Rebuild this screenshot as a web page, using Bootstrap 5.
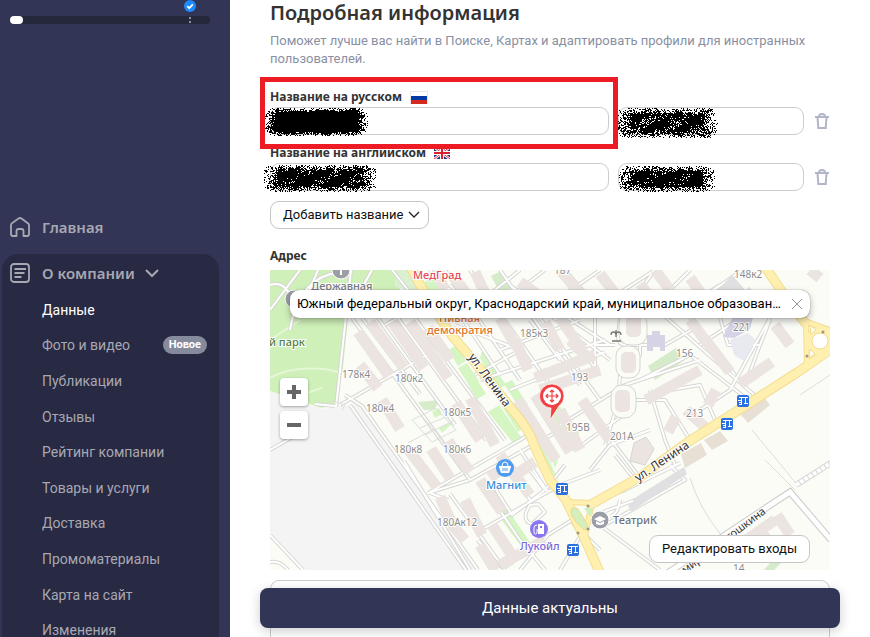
<!DOCTYPE html>
<html lang="ru">
<head>
<meta charset="utf-8">
<meta name="viewport" content="width=device-width, initial-scale=1">
<title>Подробная информация</title>
<link href="https://cdn.jsdelivr.net/npm/bootstrap@5.3.0/dist/css/bootstrap.min.css" rel="stylesheet">
<style>
  body { font-family: Roboto, "Noto Sans", sans-serif; font-size: 13px; line-height: 18px; color: #222; background: #fff; }
  .side-panel { width: 230px; background: #323555; color: #a7a8b2; }
  .side-panel a { color: inherit; text-decoration: none; }
  .level-area { height: 216px; padding: 16px 20px 0 10px; }
  .level-track { height: 8px; border-radius: 4px; background: #25273b; }
  .level-done { width: 13px; height: 8px; border-radius: 4px; background: #fff; }
  .level-mark { right: 14px; top: -16px; }
  .side-head { font-family: "Noto Sans", sans-serif; font-size: 15px; line-height: 22px; font-weight: 600; gap: 12px; padding-left: 10px; }
  .side-group { margin: 16px 11px 0 2px; padding-top: 8px; border-radius: 16px 16px 0 0; background: #282943; }
  .side-group .side-head { padding-left: 8px; gap: 10px; }
  .side-group .side-head span { margin-left: 2px; }
  .side-items { height: 356px; margin-top: 8px; padding: 0 12px 0 40px; font-size: 14px; }
  .side-items a.active { color: #fff; }
  .new-tag { font-size: 11px; line-height: 18px; padding: 0 6px; border-radius: 9px; background: #858a9c; color: #fff; font-weight: 700; }
  .page-body { padding: 1px 40px 0; }
  .page-title { font-family: "Noto Sans", sans-serif; font-size: 20px; line-height: 24px; font-weight: 600; color: #333; margin-bottom: 7px; }
  .page-note { color: #8a90a4; margin-bottom: 20px; }
  .field-label { font-family: "Noto Sans", sans-serif; font-weight: 700; font-size: 12px; line-height: 18px; color: #333; }
  .name-row { gap: 9px; margin-top: 1px; }
  .name-group { margin-bottom: 9px; }
  .name-row .long-box { flex: 339 1 0; }
  .name-row .short-box { flex: 186 1 0; }
  .plain-box { height: 28px; border: 1px solid #ccc; border-radius: 9px; padding: 0 12px; font-size: 13px; }
  .bin-btn { width: 16px; height: 28px; margin-left: 1px; }
  .line-btn { height: 28px; border: 1px solid #c6c6c6; border-radius: 9px; background: #fff; color: #111; padding: 0 8px 0 12px; font-size: 13px; line-height: 18px; }
  .add-btn { margin: 10px 0 18px; }
  .focus-frame { left: -10px; right: 212px; top: -11px; height: 72px; border: 5px solid #ed1c24; z-index: 3; pointer-events: none; }
  .scribble { left: -10px; top: -5px; width: 130px; height: 38px; z-index: 2; pointer-events: none; }
  .map-box { background: #fbfcf6; margin-top: 5px; }
  .map-box > svg { width: 100%; height: 300px; }
  .address-box { left: 20px; right: 20px; top: 20px; height: 28px; padding: 0 7px; border-radius: 9px; background: #fff; box-shadow: 0 0 1px #555, 0 3px 7px rgba(0,0,0,.3); }
  .address-box input { font-size: 13px; color: #000; text-overflow: ellipsis; }
  .zoom-set { left: 10px; top: 108px; gap: 5px; }
  .zoom-set button { width: 28px; height: 28px; border-radius: 4px; background: #fff; box-shadow: 0 1px 3px rgba(0,0,0,.35); }
  .entry-btn { right: 20px; bottom: 7px; padding: 0 12px; }
  .next-box { height: 80px; margin-top: 10px; border: 1px solid #ccc; border-radius: 9px; }
  .save-btn { left: 30px; right: 30px; bottom: 9px; height: 40px; border-radius: 8px; background: #323555; color: #fff; font-size: 15px; box-shadow: 0 3px 12px rgba(0,0,0,.2); z-index: 4; }
</style>
</head>
<body>
<div class="d-flex vh-100 overflow-hidden">
  <nav class="side-panel flex-shrink-0" aria-label="Разделы">
    <div class="level-area">
      <div class="level-track position-relative">
        <div class="level-done"></div>
        <svg class="level-mark position-absolute" width="12" height="24" viewBox="0 0 12 24" aria-hidden="true">
          <circle cx="6" cy="6" r="6" fill="#1e88ff"/><path d="M3.2 6.2l2 2 3.6-3.9" fill="none" stroke="#fff" stroke-width="1.7"/>
          <path d="M5 17h2v2H5zM5 21h2v2H5z" fill="#8d8f9f"/>
        </svg>
      </div>
    </div>
    <a href="#" class="side-head d-flex align-items-center">
      <svg width="20" height="20" viewBox="0 0 20 20" fill="none" stroke="currentColor" stroke-width="1.8" stroke-linejoin="round" aria-hidden="true"><path d="M3 19q-2 0-2-2V8q0-1 .8-1.600L8.500 1.500q1.500-1 3 0l6.700 4.900Q19 7 19 8v9q0 2-2 2h-3.500v-5q0-2-2-2h-3q-2 0-2 2v5z"/></svg>
      Главная
    </a>
    <div class="side-group">
      <a href="#" class="side-head d-flex align-items-center">
        <svg width="20" height="20" viewBox="0 0 20 20" fill="none" stroke="currentColor" stroke-width="1.800" aria-hidden="true"><rect x="1" y="1" width="18" height="18" rx="3"/><path d="M6 6h10M4.500 10h10M6 10h8M4.500 14h7M4.500 6h2"/></svg>
        <span>О компании</span>
        <svg width="14" height="9" viewBox="0 0 14 9" fill="none" stroke="currentColor" stroke-width="2" aria-hidden="true"><path d="M1 1l6 6 6-6"/></svg>
      </a>
      <div class="side-items d-flex flex-column">
        <a href="#" class="active d-flex align-items-center flex-fill" aria-current="page">Данные</a>
        <a href="#" class="d-flex align-items-center justify-content-between flex-fill">Фото и видео <span class="new-tag">Новое</span></a>
        <a href="#" class="d-flex align-items-center flex-fill">Публикации</a>
        <a href="#" class="d-flex align-items-center flex-fill">Отзывы</a>
        <a href="#" class="d-flex align-items-center flex-fill">Рейтинг компании</a>
        <a href="#" class="d-flex align-items-center flex-fill">Товары и услуги</a>
        <a href="#" class="d-flex align-items-center flex-fill">Доставка</a>
        <a href="#" class="d-flex align-items-center flex-fill">Промоматериалы</a>
        <a href="#" class="d-flex align-items-center flex-fill">Карта на сайт</a>
        <a href="#" class="d-flex align-items-center flex-fill">Изменения</a>
      </div>
    </div>
  </nav>

  <main class="flex-grow-1 position-relative overflow-hidden">
    <div class="page-body">
      <h1 class="page-title">Подробная информация</h1>
      <p class="page-note">Поможет лучше вас найти в Поиске, Картах и адаптировать профили для иностранных пользователей.</p>

      <div class="name-group position-relative">
        <label class="field-label d-flex align-items-center" for="ru-name">Название на русском
          <svg class="ms-2" width="18" height="13" viewBox="0 0 18 13" aria-hidden="true"><path fill="#e8e8e8" d="M0 0h18v13H0z"/><path fill="#fff" d="M1 1h16v4H1z"/><path fill="#0039a6" d="M1 5h16v4H1z"/><path fill="#d52b1e" d="M1 9h16v4H1z"/></svg>
        </label>
        <div class="name-row d-flex">
          <div class="long-box position-relative"><input id="ru-name" type="text" class="plain-box w-100 d-block"><svg class="scribble position-absolute" data-x="4" data-y="5" data-w="104" data-h="29" data-fill="1.6" data-seed="7" aria-hidden="true"></svg></div>
          <div class="short-box position-relative"><input type="text" class="plain-box w-100 d-block" aria-label="Сокращение на русском"><svg class="scribble position-absolute" data-x="8" data-y="5" data-w="102" data-h="31" data-fill="0.9" data-seed="21" aria-hidden="true"></svg></div>
          <button type="button" class="bin-btn btn p-0 border-0 d-flex align-items-center" aria-label="Удалить"><svg width="16" height="18" viewBox="0 0 16 18" fill="none" stroke="#b0b5c7" stroke-width="2" aria-hidden="true"><path d="M1 5h14M3.500 5l.8 11h7.400l.8-11M5 4.500q0-2.500 3-2.500t3 2.500"/></svg></button>
        </div>
        <div class="focus-frame position-absolute"></div>
      </div>

      <div>
        <label class="field-label d-flex align-items-center" for="en-name">Название на английском
          <svg class="ms-2" width="16" height="12" viewBox="0 0 16 12" aria-hidden="true"><path fill="#26337a" d="M0 0h16v12H0z"/><path d="M0 0l16 12M16 0L0 12" stroke="#fff" stroke-width="2.600"/><path d="M0 0l16 12M16 0L0 12" stroke="#e0303f" stroke-width="1"/><path d="M8 0v12M0 6h16" stroke="#fff" stroke-width="4"/><path d="M8 0v12M0 6h16" stroke="#d8202f" stroke-width="2"/></svg>
        </label>
        <div class="name-row d-flex">
          <div class="long-box position-relative"><input id="en-name" type="text" class="plain-box w-100 d-block"><svg class="scribble position-absolute" data-x="3" data-y="6" data-w="113" data-h="28" data-fill="1" data-seed="33" aria-hidden="true"></svg></div>
          <div class="short-box position-relative"><input type="text" class="plain-box w-100 d-block" aria-label="Сокращение на английском"><svg class="scribble position-absolute" data-x="10" data-y="7" data-w="97" data-h="27" data-fill="1" data-seed="48" aria-hidden="true"></svg></div>
          <button type="button" class="bin-btn btn p-0 border-0 d-flex align-items-center" aria-label="Удалить"><svg width="16" height="18" viewBox="0 0 16 18" fill="none" stroke="#b0b5c7" stroke-width="2" aria-hidden="true"><path d="M1 5h14M3.500 5l.8 11h7.400l.8-11M5 4.500q0-2.500 3-2.500t3 2.500"/></svg></button>
        </div>
      </div>
      <button type="button" class="line-btn add-btn d-flex align-items-center gap-1">Добавить название
        <svg width="12" height="8" viewBox="0 0 12 8" fill="none" stroke="#222" stroke-width="1.300" aria-hidden="true"><path d="M1 1l5 5 5-5"/></svg></button>

      <label class="field-label d-block" for="address">Адрес</label>
      <div class="map-box position-relative">
        <svg class="d-block" viewBox="270 270 560 300" preserveAspectRatio="xMidYMid slice" role="img" aria-label="Карта">
          <defs>
            <g id="lanes" fill="none" stroke-linejoin="round">
              <path d="M351 270L336 407M372 270L345 318M392 270L420 305L385 325M345 395L362 406L478 570M350 405L466 570M404 461L470 570M352 318L470 480L560 430M362 318L420 394M378 318L455 425M398 318L486 440M415 318L505 440M432 352L340 405M428 493L520 440L536 430M470 480L428 493M450 494L505 570M482 484L520 540L545 570M430 493L448 500"/>
              <path d="M476 533L560 485L600 470M478 540L500 570M490 480L512 515L545 490L530 470M520 450L548 492M505 460L530 500M530 505Q520 520 532 524L545 512L538 504ZM520 570L548 535L572 520"/>
              <path d="M430 270L500 375M445 270L520 380M470 270L550 385M500 270L580 385M520 270L470 310M545 270L490 312M600 270L540 312M655 270L590 312M690 270L650 310M720 285L680 312M510 285L610 360M540 300L610 345M455 325L520 350L475 375M500 350L580 320M480 380L605 340M510 390L605 352M530 320L560 360"/>
              <path d="M540 318L600 400M560 320L595 368L595 318M640 318V355L620 375L618 402L605 445M620 318L618 335Q618 345 625 345H665L700 325M595 345H615M660 312L760 400M690 318L735 375M740 318L700 345M770 318L730 390L700 410M760 345L745 385M720 318L728 345H760L770 320"/>
              <path d="M560 425L625 385L700 360M575 450L630 410M590 470L610 445L650 430M615 455L635 480M625 400L665 400L690 440L745 410M650 390L665 440L675 465M640 380L690 355L755 405M600 425L640 478M565 465L545 490M670 390L700 385L715 420"/>
              <path d="M600 525L660 570M595 500L625 490L680 463M603 512L635 500M670 465L685 480L605 525M590 520L560 570M600 550L570 520M620 500Q618 515 610 516"/>
              <path d="M270 450L305 430M270 535L303 570M315 404L335 406M270 562Q280 560 288 570"/>
              <path d="M270 310L300 270M290 330Q300 270 350 272M270 285Q285 280 292 300L350 310M318 270L305 300M565 270L600 310M655 270L640 290L665 312M470 310L450 285M742 270L700 300M765 310L735 290"/>
            </g>
            <g id="stop"><rect x="-6" y="-6" width="12" height="12" rx="2" fill="#2b6fe0"/><path d="M-4-4h9v1h-2v5h2v1h-4v-1h1v-5h-3v2h-1v-2h-2zM-5-1h4v5h-3v-1h2v-1h-2v-1h2v-1h-3z" fill="#fff"/></g>
            <path id="yellow" d="M411 268Q430 305 453 337L473 360L510 407Q530 430 534 445L550 480L566 500L583 535L600 573M590 505L640 477L688 442L745 406L798 372L834 347M766 268L782 292L806 324"/>
          </defs>
          <path fill="#fbfcf6" d="M270 270h560v300H270z"/>
          <path fill="#f4f4f4" d="M270 391L323 409L361 404L478 570H305L270 533Z"/>
          <path fill="#cff0b8" d="M270 270H395L400 290L348 318L343 367L335 403L322 408L270 391Z"/>
          <path fill="#daf0d0" d="M395 270h20l14 25-34-8z"/>
          <path d="M270 378Q290 366 325 369L338 372M270 340L300 320M300 395L322 388" fill="none" stroke="#e6f6d8" stroke-width="2"/>
          <g fill="#d5f5c3">
            <path d="M420 285l12-8 14 22-12 8zM448 350l9-5 10 15-9 6zM458 368l9-5 12 18-9 6zM469 386l9-5 8 13-9 5zM488 412l11-7 24 35-8 5zM501 405l9-5 16 25-8 7zM432 412l7-4 3 6-7 4zM439 428l17-8-14 13z"/>
            <path d="M500 518l10-5 24 35-8 5zM535 435l14 25 10 22-16-22zM512 380l16 25-8 4-16-25zM482 350l24 35-8 4-18-31zM460 300l20 18-10 6zM545 415l14-10 20 28-4 20zM548 448l10 12-3 8z"/>
          </g>
          <g fill="#d5ebca"><path d="M491 276l10-5 11 17-11 7zM648 366l28-18 9 12-30 20zM484 492l9-7 20 27-9 6zM497 566l12-8 5 6-10 6zM418 402l22-2-6 10h-10zM764 570l12-14 7 5-9 9zM779 556l9-5 5 6-10 5z"/></g>
          <use href="#lanes" stroke="#d6d7d3" stroke-width="4"/>
          <use href="#lanes" stroke="#fff" stroke-width="2"/>
          <g fill="none" stroke="#dcdedb" stroke-width="1"><path d="M412 420l20 22 24-12-20-22zM420 428l28-12M425 435l28-14M420 414l22 25M408 443l26-14 35 52M690 478Q700 510 722 536M752 430L795 482M800 395l30-20M765 460l30 30M330 400l15 5-3 5"/></g>
          <g fill="none" stroke="#ebe4e1" stroke-width="11">
            <path d="M358 332L389 376M370 322L404 368M392 322L424 368M410 322L448 378M428 328L450 360M360 365L378 388M382 400L400 429M456 403L480 440M470 398L495 445M407 448L437 487M431 449L450 478M448 441L470 472M465 500L482 535M480 480L502 512M490 478L505 466M500 455L530 495M440 497L453 526L465 540M492 525L515 560M480 545L495 570M500 565L545 540M510 478L535 462"/>
            <path d="M455 278L473 303M475 272L488 300M435 270L445 290M520 282L548 302M560 270L590 305M600 274L620 300M690 278L710 306M515 340L528 370M500 318L515 345M545 322L560 350M560 318L582 350M535 378L595 355M540 390L600 370M518 400L556 460M535 395L570 452M560 410L580 450M582 400L610 440M590 360L570 340"/>
            <path d="M704 338L730 372M740 384L772 362M646 400L700 370M708 405L716 390M668 432L676 417M706 428L686 410M775 325L790 345M690 320L705 340M640 284L660 310M655 270L670 290M745 290L760 310M735 548L775 520M760 530L782 560M777 515L790 535M810 270L820 278"/>
          </g>
          <g fill="#fbfcf6" stroke="#d5d6d2"><rect x="619" y="312" width="28" height="33" rx="11"/><rect x="616" y="346" width="24" height="32" rx="10"/><rect x="611" y="385" width="25" height="33" rx="11"/></g>
          <g fill="#ebe4e1"><rect x="626" y="310" width="15" height="27" rx="5"/><rect x="621" y="352" width="15" height="21" rx="5"/><rect x="615" y="390" width="15" height="22" rx="5"/><path stroke="#d5d6d2" d="M634 443l12-6 8 12-9 16-15-4z"/></g>
          <path fill="#e8e0d5" d="M681 454l20-11 6 12-22 13zM704 440l16-9 8 10-16 9zM742 405l22-8 6 8-22 18-7-8z"/>
          <path fill="#e0e0e2" d="M628 505l56-37 3 6-56 38zM633 499l51-32 2 4-53 33zM718 290l14-15 15 17-16 15z"/>
          <g fill="#d5d3e5"><path d="M647 351v-16h5v-4h8v4h5v16h-5v-5h-7v5zM723 337l10-20h20l-3 12-16 9z"/><path fill="#e9e9f2" d="M730 340l18-7 8 7-12 21-10-6z"/></g>
          <g fill="none" stroke-linejoin="round">
            <use href="#yellow" stroke="#f3dc90" stroke-width="10"/>
            <path stroke="#f3dc90" stroke-width="6" d="M566 502L592 503L584 540L566 502M806 322L807 366M802 320L832 331"/><circle cx="820" cy="341" r="11" stroke="#f3dc90" stroke-width="8"/>
            <use href="#yellow" stroke="#fff0b0" stroke-width="8"/>
            <path stroke="#fff0b0" stroke-width="4" d="M566 502L592 503L584 540L566 502M806 322L807 366M802 320L832 331"/><circle cx="820" cy="341" r="11" stroke="#fff0b0" stroke-width="6"/><circle cx="820" cy="341" r="8" fill="#fff" stroke="#f3dc90"/>
            <path fill="#fbfcf6" stroke="#f3dc90" d="M810 325l6 5-5 4zM810 349l5 5-6 4z"/>
          </g>
          <path fill="#d2efbd" stroke="#f1d987" d="M571 509q5-4 9 3l7 12q2 8-4 5l-8-8q-5-7-4-12z"/><path fill="#d2efbd" d="M584 508h9l-3 9z"/>
          <g fill="#9a9a80"><circle cx="588" cy="506" r="1.500"/><circle cx="588" cy="529" r="1.500"/><circle cx="578" cy="533" r="1.500"/><circle cx="823" cy="332" r="1.500"/><circle cx="807" cy="356" r="1.500"/></g>
          <path d="M645 588L790 492L831 540" fill="none" stroke="#c9cbc9" stroke-width="7"/><path d="M645 588L790 492L831 540" fill="none" stroke="#fff" stroke-width="5"/>
          <path d="M796 485l38-24" stroke="#d4d6d4" stroke-width="6"/><path d="M796 485l38-24" stroke="#fff" stroke-width="4" stroke-dasharray="4 1"/>

          <g font-family="Noto Sans, sans-serif" font-size="10" fill="#8b8b8b" stroke="#fff" stroke-width="2" paint-order="stroke">
            <text x="342" y="378">178к4</text><text x="395" y="382">180к2</text><text x="366" y="412">180к4</text><text x="443" y="416">180к5</text>
            <text x="394" y="453">180к8</text><text x="443" y="453">180к6</text><text x="437" y="526">180Ак12</text><text x="520" y="337">185к3</text>
            <text x="554" y="274">187</text><text x="734" y="278">148к2</text><text x="733" y="331">221</text><text x="676" y="357">156</text>
            <text x="571" y="381">193</text><text x="566" y="431">195В</text><text x="610" y="440">201А</text><text x="686" y="417">213</text><text x="733" y="572">14</text>
            <g font-size="11" font-weight="500">
              <text x="311" y="290" fill="#777b83">Державная</text><text x="413" y="279" fill="#e84958">МедГрад</text>
              <text x="439" y="322" fill="#dd7428">Пивная</text><text x="427" y="334" fill="#dd7428">демократия</text>
              <text x="262" y="346" fill="#53803a">ий парк</text><text x="486" y="489" fill="#398bdd">Магнит</text><text x="520" y="550" fill="#7866dc">Лукойл</text><text x="613" y="524" fill="#6e7178">ТеатриК</text>
            </g>
            <g font-size="12" fill="#333"><text transform="translate(468 357) rotate(54)">ул. Ленина</text><text transform="translate(638 482) rotate(-34)">ул. Ленина</text>
            <text font-size="11" transform="translate(685 574) rotate(-36)">мир</text><text font-size="11" transform="translate(729 541) rotate(-37)">тошкина</text></g>
          </g>
          <g fill="#9b9ea6" stroke="#fff"><circle cx="341" cy="270" r="9"/><circle cx="294" cy="299" r="9"/><circle cx="600" cy="520" r="9"/></g>
          <path d="M341 268v7" stroke="#fff" stroke-width="2"/>
          <path fill="#fff" d="M594 519l6-3 6 3-6 3zM596 521l4 2 4-2v3q-4 2-8 0z"/>
          <circle cx="505" cy="468" r="9" fill="#4f9df0"/><path d="M499 466h12v1l-2 6h-8l-2-6z" fill="#fff"/><path d="M502 466q0-4 3-4t3 4" fill="none" stroke="#fff"/><path d="M503 468v3M505 468v3M507 468v3" stroke="#4f9df0"/>
          <circle cx="539" cy="529" r="9" fill="#8b76ef"/><path fill="#fff" d="M538 524h6v10h-6z"/><path fill="#8b76ef" d="M540 526h2v2h-2z"/><path d="M537 525q-3 0-3 3v4q0 2 1.500 2t1.500-2v-3" fill="none" stroke="#fff"/>
          <path d="M612 341h9M616 330v7M611 335q0-3 2.500-3t2.500 3q0-3 2.500-3t2.500 3" fill="none" stroke="#777" stroke-width="1.300"/>
          <use href="#stop" x="562" y="489"/><use href="#stop" x="573" y="550"/><use href="#stop" x="727" y="424"/><use href="#stop" x="743" y="401"/>
          <path fill="#ef4044" stroke="#fff" stroke-width=".7" d="M552 384a12 12 0 0 1 12 12q0 6-5 10l-9 14 1-12a12 12 0 1 1 1-24z"/><circle cx="552" cy="396" r="9" fill="#fff"/>
          <path d="M546 396h12M552 390v12M548 394l-2 2 2 2M556 394l2 2-2 2M550 392l2-2 2 2M550 400l2 2 2-2" fill="none" stroke="#ef4044" stroke-width="1.200"/>
        </svg>
        <div class="address-box position-absolute d-flex align-items-center">
          <input id="address" type="text" class="border-0 p-0 bg-transparent flex-grow-1 w-100" value="Южный федеральный округ, Краснодарский край, муниципальное образование">
          <button type="button" class="btn p-0 border-0 d-flex ms-2" aria-label="Очистить"><svg width="12" height="12" viewBox="0 0 12 12" stroke="#999" aria-hidden="true"><path d="M1 1l10 10M11 1L1 11"/></svg></button>
        </div>
        <div class="zoom-set position-absolute d-flex flex-column">
          <button type="button" class="border-0 p-0 d-flex align-items-center justify-content-center" aria-label="Приблизить"><svg width="14" height="14" viewBox="0 0 14 14" stroke="#666" stroke-width="4" aria-hidden="true"><path d="M7 0v14M0 7h14"/></svg></button>
          <button type="button" class="border-0 p-0 d-flex align-items-center justify-content-center" aria-label="Отдалить"><svg width="14" height="14" viewBox="0 0 14 14" stroke="#666" stroke-width="4" aria-hidden="true"><path d="M0 7h14"/></svg></button>
        </div>
        <button type="button" class="line-btn entry-btn position-absolute">Редактировать входы</button>
      </div>
      <div class="next-box"></div>
    </div>
    <button type="button" class="save-btn position-absolute border-0">Данные актуальны</button>
  </main>
</div>
<script src="https://cdn.jsdelivr.net/npm/bootstrap@5.3.0/dist/js/bootstrap.bundle.min.js"></script>
<script>
  // Sprayed ink over the private names: dense in the middle, speckled at the edge.
  document.querySelectorAll('.scribble').forEach(function (el) {
    var d = el.dataset, w = +d.w, h = +d.h, seed = +d.seed, path = '';
    function rnd() { seed = (seed * 16807) % 2147483647; return seed / 2147483647; }
    for (var i = 0; i < 20; i++) rnd();
    for (var y = 0; y < h; y++) for (var x = 0; x < w; x++) {
      var ex = Math.min(x, w - x) / 16, ey = Math.min(y, h - y) / 7;
      var edge = 1 - Math.hypot(Math.max(0, 1 - ex), Math.max(0, 1 - ey));
      var wave = 0.12 * Math.sin(x / 5 + y / 3);
      if (rnd() < edge * d.fill * 0.85 + wave * edge + (edge > 0 ? 0.1 : 0)) path += 'M' + (x + +d.x) + ' ' + (y + +d.y) + 'h1v1h-1z';
    }
    el.innerHTML = '<path shape-rendering="crispEdges" d="' + path + '"/>';
  });
</script>
</body>
</html>
